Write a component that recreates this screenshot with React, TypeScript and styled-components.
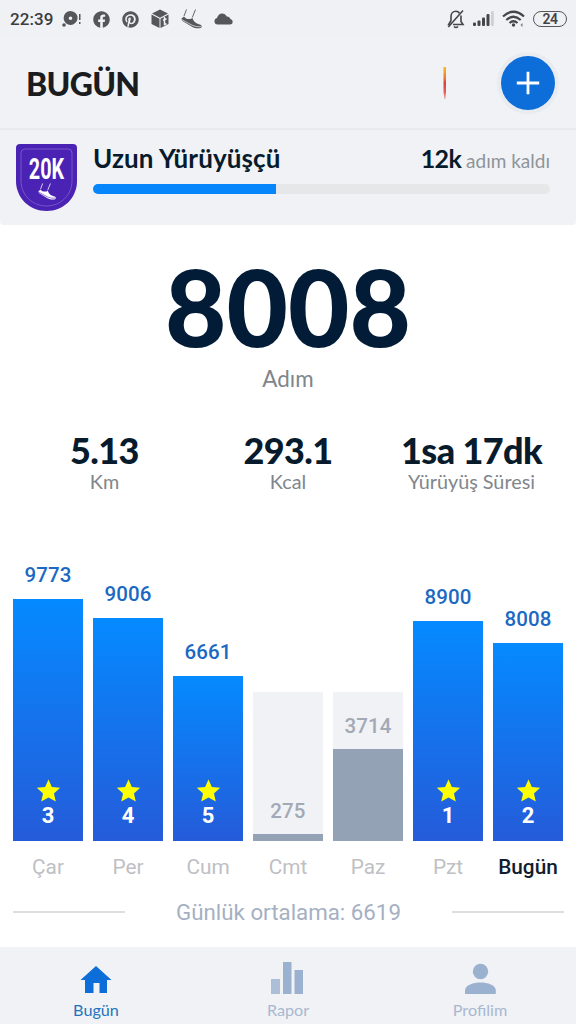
import styled, { createGlobalStyle } from "styled-components";
import { FaFacebook, FaPinterest } from "react-icons/fa";

const GlobalStyle = createGlobalStyle`
  * { box-sizing: border-box; }
  body { margin: 0; background: #fff; font-family: Lato, "Liberation Sans", sans-serif; }
  svg { display: block; flex: none; }
`;

const Screen = styled.main`
  width: 576px;
  height: 1024px;
  display: flex;
  flex-direction: column;
  overflow: hidden;
  background: #fff;
`;

const StatusBar = styled.div`
  height: 38px;
  flex: none;
  display: flex;
  justify-content: space-between;
  align-items: center;
  padding: 0 9px 0 10px;
  background: #f0f1f5;
  color: #55565a;
`;

const StatusGroup = styled.div<{ $gap: number }>`
  display: flex;
  align-items: center;
  gap: ${(p) => p.$gap}px;
`;

const Clock = styled.span`
  font: 500 17px/38px Roboto, sans-serif;
  letter-spacing: 0.1px;
  color: #3b3c40;
  width: 42px;
  margin-right: -2px;
  white-space: nowrap;
`;

const Battery = styled.span`
  width: 34px;
  height: 16px;
  border: 1.5px solid #55565a;
  border-radius: 8px;
  font: 600 14px/14px Roboto, sans-serif;
  letter-spacing: -0.4px;
  color: #444549;
  text-align: center;
`;

const Header = styled.header`
  height: 92px;
  flex: none;
  display: flex;
  align-items: center;
  padding: 0 21px 0 26px;
  background: #f0f2f5;
  border-bottom: 2px solid #e8eaed;
`;

const Title = styled.h1`
  flex: 1;
  margin: 2px 0 0;
  font-size: 32px;
  line-height: 40px;
  font-weight: 900;
  letter-spacing: -0.7px;
  color: #1a1c20;
`;

const AddButton = styled.button`
  width: 54px;
  height: 54px;
  margin-left: 54px;
  padding: 0;
  display: grid;
  place-items: center;
  border: 0;
  border-radius: 50%;
  background: #0d6dd9;
  box-shadow: 0 0 0 4px #e8ebef;
`;

const Challenge = styled.section`
  height: 95px;
  flex: none;
  display: flex;
  gap: 16px;
  padding: 14px 26px 0 16px;
  background: #f0f2f5;
  border-radius: 0 0 4px 4px;
`;

const ChallengeBody = styled.div`
  flex: 1;
`;

const ChallengeHead = styled.div`
  display: flex;
  justify-content: space-between;
  align-items: baseline;
  height: 40px;
  line-height: 28px;
  color: #071b2c;
`;

const ChallengeName = styled.span`
  font-size: 26px;
  font-weight: 700;
  letter-spacing: 0.1px;
`;

const Remaining = styled.span`
  font-size: 19px;
  color: #8f9499;

  b {
    font-size: 25px;
    letter-spacing: -0.6px;
    color: #071b2c;
  }
`;

const Track = styled.div`
  height: 10px;
  border-radius: 5px;
  overflow: hidden;
  background: #e6e7e9;
`;

const Fill = styled.div`
  width: 40%;
  height: 100%;
  background: #0786fb;
`;

const Steps = styled.section`
  height: 203px;
  flex: none;
  display: flex;
  flex-direction: column;
  align-items: center;
  padding-top: 21px;
`;

const StepCount = styled.div`
  font-size: 106px;
  line-height: 120px;
  font-weight: 900;
  color: #021b36;
`;

const StepLabel = styled.div`
  font-size: 22.4px;
  line-height: 26px;
  color: #80868b;
`;

const Stats = styled.section`
  height: 111px;
  flex: none;
  display: grid;
  grid-template-columns: repeat(3, 183.5px);
  justify-content: center;
`;

const Stat = styled.div`
  text-align: center;
  white-space: nowrap;
`;

const StatValue = styled.div`
  font-size: 36px;
  line-height: 44px;
  font-weight: 900;
  letter-spacing: -0.6px;
  color: #071b2c;
`;

const StatLabel = styled.div`
  font-size: 19.8px;
  line-height: 18px;
  color: #80868b;
`;

const Chart = styled.section`
  height: 302px;
  flex: none;
  display: grid;
  grid-template-columns: repeat(7, 70px);
  column-gap: 10px;
  padding-left: 13px;
  align-items: end;
  font-family: Roboto, sans-serif;
  text-align: center;
`;

const Column = styled.div<{ $missed?: boolean }>`
  display: flex;
  flex-direction: column;
  justify-content: flex-end;
  height: ${(p) => (p.$missed ? "149px" : "auto")};
  background: ${(p) => (p.$missed ? "#f0f2f5" : "none")};
`;

const BarValue = styled.div<{ $missed?: boolean }>`
  padding-bottom: ${(p) => (p.$missed ? 11 : 12)}px;
  font-size: 20.5px;
  line-height: 24px;
  font-weight: 500;
  letter-spacing: 0.1px;
  color: ${(p) => (p.$missed ? "#a2a9b6" : "#1b69c2")};
`;

const Bar = styled.div<{ $missed?: boolean }>`
  display: flex;
  flex-direction: column;
  justify-content: flex-end;
  align-items: center;
  gap: 2px;
  padding-bottom: ${(p) => (p.$missed ? 0 : 13)}px;
  background: ${(p) => (p.$missed ? "#93a3b5" : "linear-gradient(#058aff, #255bd9)")};
`;

const Streak = styled.span`
  font-size: 22px;
  line-height: 24px;
  font-weight: 700;
  color: #fff;
`;

const Days = styled.div`
  height: 51px;
  flex: none;
  display: grid;
  grid-template-columns: repeat(7, 70px);
  column-gap: 10px;
  padding-left: 13px;
  text-align: center;
`;

const Day = styled.span<{ $today?: boolean }>`
  display: flex;
  justify-content: center;
  font: ${(p) => (p.$today ? 500 : 400)} 20.8px/52px Roboto, sans-serif;
  color: ${(p) => (p.$today ? "#111d2e" : "#bec0c4")};
`;

const Average = styled.div`
  flex: 1;
  display: flex;
  justify-content: space-between;
  align-items: flex-start;
  padding: 0 12px 0 13px;
  font: 400 22.3px/40px Roboto, sans-serif;
  color: #a5b0c2;
`;

const Rule = styled.i`
  width: 112px;
  height: 2px;
  margin-top: 19px;
  background: #dcdee1;
`;

const TabBar = styled.nav`
  height: 77px;
  flex: none;
  display: grid;
  grid-template-columns: repeat(3, 1fr);
  background: #f0f2f5;
`;

const Tab = styled.a<{ $active?: boolean }>`
  display: flex;
  flex-direction: column;
  align-items: center;
  padding-top: 15px;
  font-size: 16.2px;
  line-height: 32px;
  color: ${(p) => (p.$active ? "#2474bd" : "#a9b8d0")};

  svg {
    fill: ${(p) => (p.$active ? "#0d6dd9" : "#9bb1d0")};
  }
`;

interface DayEntry {
  day: string;
  steps: number;
  streak?: number;
  today?: boolean;
}

const week: DayEntry[] = [
  { day: "Çar", steps: 9773, streak: 3 },
  { day: "Per", steps: 9006, streak: 4 },
  { day: "Cum", steps: 6661, streak: 5 },
  { day: "Cmt", steps: 275 },
  { day: "Paz", steps: 3714 },
  { day: "Pzt", steps: 8900, streak: 1 },
  { day: "Bugün", steps: 8008, streak: 2, today: true },
];

const stats = [
  { value: "5.13", label: "Km" },
  { value: "293.1", label: "Kcal" },
  { value: "1sa 17dk", label: "Yürüyüş Süresi" },
];

// 6000 steps is the daily goal, the height of the grey column
const barHeight = (steps: number) => Math.max(6, Math.round(steps * 0.02475));

const DiscIcon = () => (
  <svg width="19" height="18" viewBox="0 0 19 18" fill="currentColor">
    <path fillRule="evenodd" d="M8.5 1a7 7 0 1 1-3 13.3C3.400 13 1.600 11 1.600 8a7 7 0 0 1 6.900-7Zm0 5.400a1.800 1.800 0 1 0 0 3.600 1.800 1.800 0 0 0 0-3.600Z" />
    <circle cx="2" cy="15" r="1.800" />
    <path d="M17 4h1.500v6H17zM17 12h1.500v2H17z" />
  </svg>
);

const BoxIcon = () => (
  <svg width="18" height="20" viewBox="0 0 18 20">
    <path d="M9 .5 17 4.500 9 8.700 1 4.500ZM.5 5.500 8.500 9.700V19L.5 15ZM9.500 9.700l8-4.200V15l-8 4Z" fill="currentColor" />
    <path d="M13.500 8v7.500l2-.8M12 11.300l3.500-1.500" fill="none" stroke="#f0f1f5" strokeWidth="1.500" />
  </svg>
);

const ShoeIcon = ({ size = 21, sole = "#f0f1f5" }) => (
  <svg width={size} height={size} viewBox="0 0 21 20">
    <path d="M.5 9 3 7c1.500 2.200 4 3 7 2.300l1.500-.8c.5 2.500 2.300 4.500 4.500 5.500l4 1.600c1 .7.9 2.200 0 3-3.500.6-6.500 0-9-1.400L1 11.200Z" fill="currentColor" />
    <path d="M.8 10.200 11 15.700c2.600 1.200 5.800 1.700 9.200 1.500" fill="none" stroke={sole} strokeWidth=".7" />
    <path d="M5.500 0 3 6.500M14.500 0 11.300 8" fill="none" stroke="currentColor" strokeWidth=".9" />
  </svg>
);

const CloudIcon = () => (
  <svg width="19" height="12" viewBox="0 0 19 12" fill="currentColor">
    <path d="M3.500 11.500A3.300 3.300 0 0 1 3 5c.8-2.600 2.700-4.500 5-4.500 2.200 0 3.800 1.100 4.700 2.900 2-.1 3.300 1 3.600 2.700 3.200.6 3.200 5.400-.3 5.400Z" />
  </svg>
);

const MutedBellIcon = () => (
  <svg width="18" height="20" viewBox="0 0 18 20" fill="none" stroke="#45464a" strokeWidth="1.600">
    <path d="M12.500 4.300C11.500 2.800 10.300 2.300 9 2.300 5.800 2.300 4 4.700 4 7.500v4.300M14 6.500v6l2 3H6M4 11.500l-2.300 4h2" />
    <path d="M1.300 18 16 1.500" />
    <path d="M7 17.500q2 2 4 0" />
  </svg>
);

const SignalIcon = () => (
  <svg width="21" height="16" viewBox="0 0 21 16" fill="#45464a">
    <rect x="0" y="11.500" width="3" height="3.500" rx="1" />
    <rect x="4.500" y="9.500" width="3" height="5.500" rx="1" />
    <rect x="9" y="6.500" width="3" height="8.500" rx="1" />
    <rect x="13.500" y="3" width="3" height="12" rx="1" />
    <rect x="18" y="0" width="2.800" height="15" rx="1" fill="#cfd0d4" />
  </svg>
);

const WifiIcon = () => (
  <svg width="23" height="18" viewBox="0 0 23 18" fill="none" stroke="#45464a" strokeWidth="2.200">
    <path d="M1 6.500Q11.500-3 22 6.500M4.300 10Q11.500 3.500 18.700 10M7.500 13Q11.500 9.500 15.500 13" />
    <circle cx="11.500" cy="15" r="1.700" fill="#45464a" stroke="none" />
    <path d="m18.500 15 2-2v4Z" fill="#77787c" stroke="none" />
  </svg>
);

const FlameSliver = () => (
  <svg width="4" height="34" viewBox="0 0 4 34">
    <defs>
      <linearGradient id="flame" x2="0" y2="1">
        <stop offset="0" stopColor="#f4bd16" />
        <stop offset=".35" stopColor="#ee7638" />
        <stop offset=".5" stopColor="#d93f3f" />
        <stop offset=".8" stopColor="#e9605b" />
        <stop offset="1" stopColor="#cfa9a4" />
      </linearGradient>
    </defs>
    <path d="M.5 1H3v25l-.6 7H1.500L.5 26Z" fill="url(#flame)" />
  </svg>
);

const PlusIcon = () => (
  <svg width="24" height="24" viewBox="0 0 24 24" stroke="#fff" strokeWidth="2.800">
    <path d="M12 .8v22.400M.8 12h22.400" />
  </svg>
);

const Badge = () => (
  <svg width="61" height="68" viewBox="0 0 61 68">
    <path d="M4 0h53q4 0 4 4v33c0 17-13.500 30-30.500 30S0 54 0 37V4q0-4 4-4Z" fill="#4a22b4" />
    <path d="M9 5h43q4 0 4 4v28c0 14-11.500 25-25.500 25S5 51 5 37V9q0-4 4-4Z" fill="none" stroke="#7754cb" />
    <text transform="translate(30.5 35) scale(.66 1)" textAnchor="middle" fill="#fff" fontFamily="Roboto" fontWeight="700" fontSize="30">
      20K
    </text>
    <g transform="translate(22 39)" color="#fff">
      <ShoeIcon size={18} sole="#4a22b4" />
    </g>
  </svg>
);

const Star = () => (
  <svg width="25" height="23" viewBox="0 0 26 24">
    <path d="m13 .5 3.500 7.800 8.700.9-6.500 5.800 1.900 8.500L13 19.200 5.400 23.500 7.300 15 .8 9.200l8.700-.9Z" fill="#ff0" />
  </svg>
);

const HomeIcon = () => (
  <svg width="32" height="32" viewBox="0 0 32 32">
    <path d="M16 4 31.500 18H27v13h-7.500V21h-6v10H5V18H.5Z" />
  </svg>
);

const ReportIcon = () => (
  <svg width="34" height="32" viewBox="0 0 34 32">
    <path d="M0 17h9v15H0z" opacity=".8" />
    <path d="M12 0h8.500v32H12zM23.500 8H32v24h-8.500z" />
  </svg>
);

const ProfileIcon = () => (
  <svg width="32" height="32" viewBox="0 0 32 32">
    <circle cx="16.500" cy="9.500" r="7.700" />
    <path d="M1 32v-3.500C1 23 9.500 20.500 16.500 20.500S31.800 23 31.800 28.500V32Z" />
  </svg>
);

const App = () => {
  return (
    <Screen>
      <GlobalStyle />
      <StatusBar>
        <StatusGroup $gap={12}>
          <Clock>22:39</Clock>
          <DiscIcon />
          <FaFacebook size={17} />
          <FaPinterest size={17} />
          <BoxIcon />
          <ShoeIcon />
          <CloudIcon />
        </StatusGroup>
        <StatusGroup $gap={8}>
          <MutedBellIcon />
          <SignalIcon />
          <WifiIcon />
          <Battery>24</Battery>
        </StatusGroup>
      </StatusBar>

      <Header>
        <Title>BUGÜN</Title>
        <FlameSliver />
        <AddButton aria-label="Ekle">
          <PlusIcon />
        </AddButton>
      </Header>

      <Challenge>
        <Badge />
        <ChallengeBody>
          <ChallengeHead>
            <ChallengeName>Uzun Yürüyüşçü</ChallengeName>
            <Remaining>
              <b>12k</b> adım kaldı
            </Remaining>
          </ChallengeHead>
          <Track>
            <Fill />
          </Track>
        </ChallengeBody>
      </Challenge>

      <Steps>
        <StepCount>8008</StepCount>
        <StepLabel>Adım</StepLabel>
      </Steps>

      <Stats>
        {stats.map((s) => (
          <Stat key={s.label}>
            <StatValue>{s.value}</StatValue>
            <StatLabel>{s.label}</StatLabel>
          </Stat>
        ))}
      </Stats>

      <Chart>
        {week.map((d) => (
          <Column key={d.day} $missed={!d.streak}>
            <BarValue $missed={!d.streak}>{d.steps}</BarValue>
            <Bar $missed={!d.streak} style={{ height: barHeight(d.steps) }}>
              {d.streak && (
                <>
                  <Star />
                  <Streak>{d.streak}</Streak>
                </>
              )}
            </Bar>
          </Column>
        ))}
      </Chart>
      <Days>
        {week.map((d) => (
          <Day key={d.day} $today={d.today}>{d.day}</Day>
        ))}
      </Days>
      <Average>
        <Rule />
        <span>Günlük ortalama: 6619</span>
        <Rule />
      </Average>

      <TabBar>
        <Tab $active>
          <HomeIcon />
          Bugün
        </Tab>
        <Tab>
          <ReportIcon />
          Rapor
        </Tab>
        <Tab>
          <ProfileIcon />
          Profilim
        </Tab>
      </TabBar>
    </Screen>
  );
};

export default App;
